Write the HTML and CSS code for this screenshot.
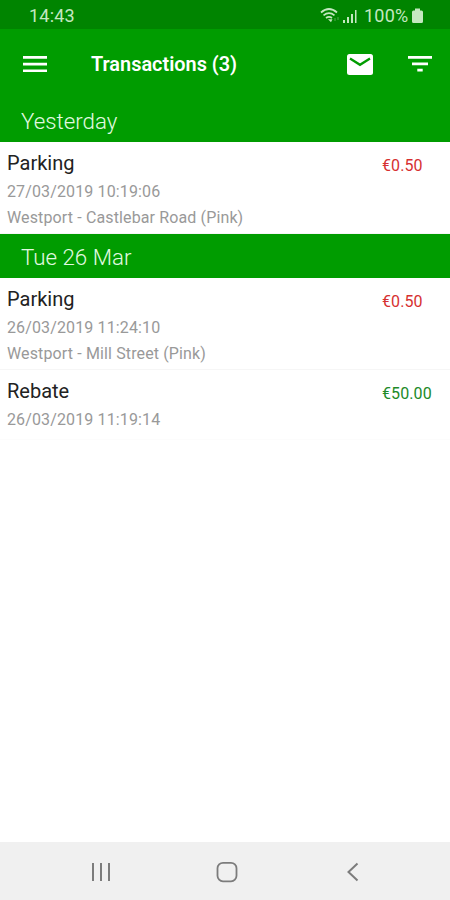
FILE: index.html
```html
<!DOCTYPE html>
<html lang="en">
<head>
<meta charset="utf-8">
<title>Transactions</title>
<link rel="stylesheet" href="styles.css">
</head>
<body>
<div class="screen">
  <div class="status">
    <span class="clock">14:43</span>
    <div class="indicators">
      <svg class="wifi" width="21" height="18" viewBox="0 0 21 18" fill="none" stroke="currentColor" stroke-width="1.700">
        <path d="M1 5.500Q9 -1.500 17 5.500M3.500 8.300Q9 3.800 14.500 8.300M6 11Q9 8.700 12 11"/>
        <path d="M8 12.300h4.500l-1.500 3z" fill="currentColor" stroke="none"/>
        <path d="M15 11v3M18 10v3" stroke-width="1" opacity=".4"/>
      </svg>
      <svg class="signal" width="15" height="16" viewBox="0 0 15 16" fill="currentColor">
        <path d="M0 12h2v3H0zM4 9h2v6H4zM8 6h2v9H8zM12 2h1.500v13H12z"/>
      </svg>
      <span class="percent">100%</span>
      <svg class="battery" width="11" height="16" viewBox="0 0 11 16" fill="currentColor">
        <path d="M3 0.500h5v2h1.500q1.500 0 1.500 1.500v9.500q0 1.500-1.500 1.500h-8Q0 15 0 13.500V4q0-1.500 1.500-1.500H3z"/>
      </svg>
    </div>
  </div>
  <header class="toolbar">
    <svg class="menu" width="24" height="17" viewBox="0 0 24 17" fill="currentColor"><path d="M0 0h24v2.700H0zM0 6.700h24v2.700H0zM0 13.400h24v2.700H0z"/></svg>
    <h1>Transactions (3)</h1>
    <svg class="mail" width="26" height="21" viewBox="0 0 26 21">
      <rect width="26" height="21" rx="2.500" fill="currentColor"/>
      <path d="M3 4.500l10 6.300 10-6.300" fill="none" stroke="#009c00" stroke-width="2.300"/>
    </svg>
    <svg class="filter" width="24" height="16" viewBox="0 0 24 16" fill="currentColor"><path d="M0 0h24v2.700H0zM4 6.500h16v2.700H4zM9.300 12.800h5.400v2.700H9.300z"/></svg>
  </header>
  <main>
    <h2 class="first">Yesterday</h2>
    <article>
      <div class="details"><h3>Parking</h3><p>27/03/2019 10:19:06</p><p>Westport - Castlebar Road (Pink)</p></div>
      <span class="amount debit">€0.50</span>
    </article>
    <h2>Tue 26 Mar</h2>
    <article>
      <div class="details"><h3>Parking</h3><p>26/03/2019 11:24:10</p><p>Westport - Mill Street (Pink)</p></div>
      <span class="amount debit">€0.50</span>
    </article>
    <article class="short">
      <div class="details"><h3>Rebate</h3><p>26/03/2019 11:19:14</p></div>
      <span class="amount credit">€50.00</span>
    </article>
  </main>
  <nav>
    <svg width="20" height="20" viewBox="0 0 20 20" stroke="currentColor" stroke-width="2"><path d="M2 1v18M10 1v18M18 1v18"/></svg>
    <svg width="22" height="22" viewBox="0 0 22 22" fill="none" stroke="currentColor" stroke-width="1.800"><rect x="1.500" y="1.800" width="19" height="18.500" rx="5.500"/></svg>
    <svg width="20" height="20" viewBox="0 0 20 20" fill="none" stroke="currentColor" stroke-width="2"><path d="M14.500 1.500L5.500 10l9 8.500"/></svg>
  </nav>
</div>
</body>
</html>
```
FILE: styles.css
```css
* { box-sizing: border-box; }
body, h1, h2, h3, p { margin: 0; }
body { font-family: Roboto, "Liberation Sans", sans-serif; background: #fff; }
svg { display: block; flex: none; }
.screen { height: 900px; display: flex; flex-direction: column; }
.status {
  height: 29px; padding: 2px 27px 0 29px; background: #008400; color: #c4e8c0;
  display: flex; align-items: center; justify-content: space-between;
}
.clock { font-size: 18px; letter-spacing: 0.2px; }
.indicators { display: flex; align-items: center; }
.signal { margin-left: 2px; }
.percent { width: 45px; margin: 0 3px 0 6px; font-size: 18px; letter-spacing: 0.2px; }
.toolbar {
  height: 70px; padding: 0 18px 0 23px; background: #009c00; color: #fff;
  display: flex; align-items: center;
}
.toolbar h1 { flex: 1; margin-left: 44px; font-size: 19.900px; font-weight: 600; }
.mail { margin-right: 1px; }
.filter { margin-left: 34px; }
main { flex: 1; }
h2 {
  height: 44px; padding: 3px 21px 0; background: #009c00; color: #e2fae0;
  font-size: 22.300px; line-height: 41px; font-weight: 300;
}
h2.first { height: 43px; padding-top: 2px; }
article {
  height: 92px; padding: 8px 7px 0; display: flex; justify-content: space-between;
  border-bottom: 1px solid #f6f6f6;
}
article.short { height: 70px; border-color: #fcfcfc; }
h3 { margin-bottom: 2px; font-size: 20px; line-height: 27px; font-weight: 400; color: #222; }
p { font-size: 16px; line-height: 26px; color: #999; white-space: nowrap; letter-spacing: 0.13px; }
.amount { width: 61px; font-size: 16px; line-height: 31px; letter-spacing: 0.1px; }
.debit { color: #d63030; }
.credit { color: #218a28; }
nav {
  height: 58px; background: #f0f0f0; color: #7c7c7c;
  display: grid; grid-template-columns: repeat(3, 126px); justify-content: center;
  place-items: center; padding: 1px 0 0 3px;
}
```
